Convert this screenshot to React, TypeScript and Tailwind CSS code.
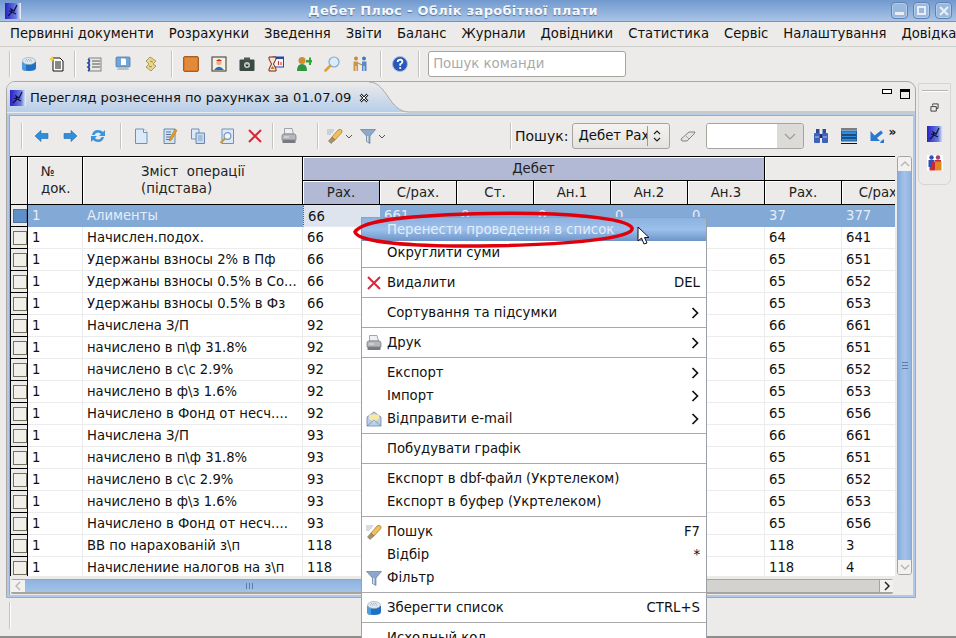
import React from "react";

const FONT = "font-['DejaVu_Sans',sans-serif]";

type IconProps = { className?: string };

function Svg({ children, className = "" }: { children: React.ReactNode; className?: string }) {
  return (
    <svg viewBox="0 0 16 16" className={`w-4 h-4 shrink-0 ${className}`}>
      {children}
    </svg>
  );
}

function AppIcon({ className }: IconProps) {
  return (
    <Svg className={className}>
      <defs>
        <linearGradient id="app" x1="0" x2="1" y1="0" y2="0">
          <stop offset="0" stopColor="#2a20c8" />
          <stop offset="0.7" stopColor="#6a80dc" />
          <stop offset="1" stopColor="#f0f4fa" />
        </linearGradient>
      </defs>
      <rect width="16" height="16" fill="url(#app)" />
      <path d="M3 13 L7 9 L6 6 L9 8 L12 2 M7 9 L11 11 M4 8 L7 9" stroke="#101040" strokeWidth="1.2" fill="none" />
    </Svg>
  );
}

function DbIcon({ className }: IconProps) {
  return (
    <Svg className={className}>
      <path d="M1 6 V12 Q1 15 8 15 Q15 15 15 12 V6 Z" fill="#1f6fc4" />
      <path d="M1 6 V12 Q1 15 5 15 V6 Z" fill="#4f9be0" />
      <ellipse cx="8" cy="5" rx="6.5" ry="3.5" fill="#dfe6ee" stroke="#8aa" strokeWidth="0.6" />
      <path d="M4 5 H12 M5 3.6 H11" stroke="#8a9aa8" strokeWidth="0.7" strokeDasharray="1 1" />
    </Svg>
  );
}

function NoteStarIcon() {
  return (
    <Svg>
      <path d="M4 2 H11 L14 5 V15 H4 Z" fill="#fff" stroke="#111" strokeWidth="1" />
      <path d="M6 6 H12 M6 8 H12 M6 10 H12 M6 12 H12" stroke="#111" strokeWidth="1" />
      <path d="M3 0 L4 2 L6 3 L4 4 L3 6 L2 4 L0 3 L2 2 Z" fill="#f5d020" />
    </Svg>
  );
}

function ListLinkIcon() {
  return (
    <Svg>
      <rect x="3" y="2" width="12" height="13" fill="#e8e8e4" stroke="#666" strokeWidth="0.8" />
      <path d="M6 5 H14 M6 8 H14 M6 11 H14" stroke="#555" strokeWidth="1" />
      <path d="M2 3 Q5 5 2 7 Q5 9 2 11 Q5 13 2 15" stroke="#2448a8" strokeWidth="1.6" fill="none" />
    </Svg>
  );
}

function MonitorIcon() {
  return (
    <Svg>
      <rect x="1" y="1" width="14" height="10" rx="1" fill="#6ea6dc" stroke="#5a7a9c" strokeWidth="0.8" />
      <path d="M6 2.5 H10 L11 3.5 V9 H6 Z" fill="#fff" />
      <path d="M3 12 H13 L14 14 H2 Z" fill="#b8c0c8" />
    </Svg>
  );
}

function ScrollIcon() {
  return (
    <Svg>
      <path d="M7 1 L13 5 L10 8 L13 10 L8 15 L3 11 L6 8 L3 5 Z" fill="#e6d690" stroke="#9a8a40" strokeWidth="0.8" />
      <path d="M7 5 L10 6 M6 10 L9 11" stroke="#8a7a30" strokeWidth="0.8" />
    </Svg>
  );
}

function OrangeSquare() {
  return (
    <Svg>
      <rect x="0.5" y="0.5" width="15" height="15" rx="1.5" fill="#d9772a" stroke="#a85c20" />
      <rect x="2" y="2" width="12" height="12" fill="#e08a3c" />
    </Svg>
  );
}

function PortraitIcon() {
  return (
    <Svg>
      <rect x="1" y="1" width="14" height="14" fill="#f4f0e0" stroke="#333" />
      <circle cx="8" cy="6.5" r="2.6" fill="#e8b090" />
      <path d="M5 5 Q8 1.5 11 5 Z" fill="#c82818" />
      <path d="M3 14 Q8 7.5 13 14 Z" fill="#2a6cb8" />
    </Svg>
  );
}

function CameraIcon() {
  return (
    <Svg>
      <rect x="0.5" y="3.5" width="15" height="11.5" rx="1" fill="#3a4a44" />
      <rect x="5" y="1.5" width="6" height="3" fill="#4a5a54" />
      <circle cx="8" cy="9" r="3" fill="#c8d0c8" />
      <circle cx="8" cy="9" r="1.4" fill="#202824" />
      <path d="M7 8 H9 M8 7 V9" stroke="#e0e0e0" strokeWidth="0.6" />
    </Svg>
  );
}

function HourglassIcon() {
  return (
    <Svg>
      <rect x="5" y="1" width="10.5" height="10" fill="#f4f4f8" stroke="#2848a8" />
      <rect x="5" y="1" width="10.5" height="2" fill="#2848a8" />
      <path d="M10 5 H11 V9 H10 Z M12.5 6 H13.5 V9 H12.5 Z" fill="#d03020" />
      <path d="M1 1 H8 V3 L5.5 8 L8 13 V15 H1 V13 L3.5 8 L1 3 Z" fill="#f2e8d0" stroke="#801c10" strokeWidth="1" />
      <path d="M2.5 13 L4.5 10 L6.5 13 Z" fill="#b08030" />
    </Svg>
  );
}

function UserAddIcon() {
  return (
    <Svg>
      <circle cx="6" cy="4.5" r="3.5" fill="#d48a30" />
      <path d="M1 15 Q1 8 6 8 Q11 8 11 15 Z" fill="#2f9440" />
      <path d="M10 4 H13 V1.5 H15 V4 H16 V6.5 H15 V9 H13 V6.5 H10 Z" fill="#2ca838" />
    </Svg>
  );
}

function MagnifierIcon() {
  return (
    <Svg>
      <circle cx="10" cy="6" r="5" fill="#d8ecfa" stroke="#88a8c8" strokeWidth="1.2" />
      <path d="M6 10 L1.5 14.5" stroke="#dba040" strokeWidth="2.6" strokeLinecap="round" />
    </Svg>
  );
}

function MeetingIcon() {
  return (
    <Svg>
      <circle cx="4" cy="2.5" r="2" fill="#c88a40" />
      <path d="M1.5 5.5 H6 V15 H4.5 V10 H3.5 V15 H1.5 Z" fill="#c89848" />
      <circle cx="12" cy="2.5" r="2" fill="#4878b8" />
      <path d="M10 5.5 H14.5 V15 H12.5 V10 H11.5 V15 H10 Z" fill="#5888c8" />
      <path d="M6 7 L10 9" stroke="#b89040" strokeWidth="1.2" />
    </Svg>
  );
}

function HelpIcon() {
  return (
    <Svg>
      <circle cx="8" cy="8" r="7.5" fill="#2858b8" stroke="#a8bcdc" />
      <path d="M5.6 6 Q5.8 3.6 8.2 3.6 Q10.6 3.8 10.4 6 Q10 7.4 8.2 8.2 V9.8" fill="none" stroke="#fff" strokeWidth="1.8" />
      <circle cx="8.2" cy="12" r="1.1" fill="#fff" />
    </Svg>
  );
}

function ArrowLeftIcon() {
  return (
    <Svg>
      <path d="M1 8 L7 2.5 V5.5 H14 V10.5 H7 V13.5 Z" fill="#2f8fdc" stroke="#2068b0" strokeWidth="0.6" />
    </Svg>
  );
}

function ArrowRightIcon() {
  return (
    <Svg>
      <path d="M15 8 L9 2.5 V5.5 H2 V10.5 H9 V13.5 Z" fill="#2f8fdc" stroke="#2068b0" strokeWidth="0.6" />
    </Svg>
  );
}

function RefreshIcon() {
  return (
    <Svg>
      <path d="M2 7 Q3 2 8 2 Q11 2 13 4 L15 2 V8 H9 L11 6 Q9.5 4.5 8 4.5 Q5.5 4.5 4.5 7 Z" fill="#3c94dc" />
      <path d="M14 9 Q13 14 8 14 Q5 14 3 12 L1 14 V8 H7 L5 10 Q6.5 11.5 8 11.5 Q10.5 11.5 11.5 9 Z" fill="#3c94dc" />
    </Svg>
  );
}

function PageIcon() {
  return (
    <Svg>
      <path d="M2.5 1 H10.5 L14 4.5 V15.5 H2.5 Z" fill="#dce9f8" stroke="#7090b8" />
      <path d="M10.5 1 V4.5 H14" fill="#fff" stroke="#7090b8" />
    </Svg>
  );
}

function EditPageIcon() {
  return (
    <Svg>
      <path d="M2 1 H13 V15.5 H2 Z" fill="#cfe2f6" stroke="#6888b0" />
      <path d="M4 4 H9 M4 6.5 H9 M4 9 H9 M4 11.5 H9" stroke="#506888" strokeWidth="0.9" />
      <path d="M13 1 L15 2.5 L9.5 12 L7.5 13 L7.8 10.5 Z" fill="#e8a020" stroke="#a86810" strokeWidth="0.5" />
    </Svg>
  );
}

function CopyIcon() {
  return (
    <Svg>
      <path d="M1.5 1 H9 V11 H1.5 Z" fill="#dce9f8" stroke="#7090b8" />
      <path d="M6 5 H14.5 V15.5 H6 Z" fill="#c8ddf4" stroke="#6888b0" />
      <path d="M8 8 H12.5 M8 10 H12.5 M8 12 H12.5" stroke="#7090b8" strokeWidth="0.8" />
    </Svg>
  );
}

function FindPageIcon() {
  return (
    <Svg>
      <path d="M3 1 H14.5 V15.5 H3 Z" fill="#dce9f8" stroke="#7090b8" />
      <circle cx="8.5" cy="8" r="3.4" fill="#f0f6fc" stroke="#7898c0" strokeWidth="1.2" />
      <path d="M6 10.5 L1.5 15" stroke="#c8983c" strokeWidth="2.2" />
    </Svg>
  );
}

function DeleteIcon({ className }: IconProps) {
  return (
    <Svg className={className}>
      <path d="M2 2 L14 14 M14 2 L2 14" stroke="#d8283c" strokeWidth="2" />
    </Svg>
  );
}

function PrinterIcon({ className }: IconProps) {
  return (
    <Svg className={className}>
      <path d="M3.5 0.5 H11 L12.5 6 H3.5 Z" fill="#eef0f2" stroke="#8a9096" strokeWidth="0.8" />
      <path d="M1 8 Q1 6 3 6 H13 Q15 6 15 8 V12 H1 Z" fill="#b4b8bc" stroke="#777" strokeWidth="0.7" />
      <path d="M1.5 12 H14.5 V15 H1.5 Z" fill="#777b80" />
      <path d="M3 9 H8" stroke="#e8eaec" strokeWidth="1" />
    </Svg>
  );
}

function SearchPenIcon({ className }: IconProps) {
  return (
    <Svg className={className}>
      <path d="M5 9 L11 2 Q13 0.5 15 2.5 Q15.5 4 14 5.5 L8 12 Z" fill="#f0c060" stroke="#a07820" strokeWidth="0.7" />
      <path d="M5 9 L8 12 L4 15.5 L1.5 13 Z" fill="#a89070" stroke="#706040" strokeWidth="0.5" />
      <path d="M0 2 H7 M0 4 H6 M0 6 H4" stroke="#9aa8c0" strokeWidth="0.8" />
    </Svg>
  );
}

function FilterIcon({ className }: IconProps) {
  return (
    <Svg className={className}>
      <path d="M0.5 1.5 H15.5 L10 8 V15.5 L6.5 13.5 V8 Z" fill="#8ca8cc" stroke="#5a6e8c" strokeWidth="0.6" />
      <path d="M7 8 H8.4 V14 L7 13.4 Z" fill="#d4e0ee" />
    </Svg>
  );
}

function MailIcon({ className }: IconProps) {
  return (
    <Svg className={className}>
      <path d="M1 6 L8 1 L15 6 V15 H1 Z" fill="#b8d0ec" stroke="#7088a8" strokeWidth="0.8" />
      <path d="M3 3.5 H13 V8 L8 11 L3 8 Z" fill="#f8e8a8" />
      <path d="M1 15 L8 9 L15 15" fill="none" stroke="#7088a8" strokeWidth="0.7" />
    </Svg>
  );
}

function Caret() {
  return (
    <svg viewBox="0 0 8 5" className="w-2 h-[5px] shrink-0 ml-[2px]">
      <path d="M1 1 L4 4 L7 1" fill="none" stroke="#555" strokeWidth="1" />
    </svg>
  );
}

function EraserIcon() {
  return (
    <Svg>
      <path d="M1 11 L9 4 H15 L14 6 L7 13 H2 Z" fill="#e4e4e0" stroke="#777" strokeWidth="0.9" />
      <path d="M6 8 L9 11" stroke="#888" strokeWidth="0.7" />
    </Svg>
  );
}

function BinocularsIcon() {
  return (
    <Svg>
      <rect x="3" y="1" width="3.5" height="4" fill="#2d4c98" />
      <rect x="9.5" y="1" width="3.5" height="4" fill="#2d4c98" />
      <rect x="1" y="5" width="6" height="10" rx="1" fill="#3e62b8" />
      <rect x="9" y="5" width="6" height="10" rx="1" fill="#3e62b8" />
      <rect x="7" y="6" width="2" height="4" fill="#1d2d70" />
      <path d="M2 9 H6 M10 9 H14" stroke="#b0c4ec" strokeWidth="1" />
    </Svg>
  );
}

function RowsIcon() {
  return (
    <Svg>
      <path d="M0 1 H16 M0 15.5 H16" stroke="#111" strokeWidth="1" />
      <rect x="0.5" y="3" width="15" height="10" fill="#2f8ce0" stroke="#1c5ea8" />
      <path d="M1 7 H15 M1 10 H15" stroke="#111" strokeWidth="1" />
    </Svg>
  );
}

function UndoIcon() {
  return (
    <Svg>
      <path d="M1.5 3 V13 H11 L8 10 L14 5 L12 2.5 L5.5 7.5 Z" fill="#2a78d0" />
      <path d="M12 13 L15 11 V15 H11 Z" fill="#2a78d0" />
    </Svg>
  );
}

function PeopleIcon() {
  return (
    <Svg>
      <rect width="16" height="16" fill="#fff" />
      <circle cx="4.5" cy="2.5" r="2.2" fill="#3050b8" />
      <path d="M1.5 5 H7.5 V12 H1.5 Z" fill="#3050b8" />
      <circle cx="11" cy="2.5" r="2.2" fill="#a04070" />
      <path d="M8 5 H14 V9 H8 Z" fill="#c82838" />
      <path d="M5 7 H8 V15.5 H5 Z" fill="#c82838" />
      <path d="M8 6.5 H14.5 V15.5 H8 Z" fill="#dc8a20" />
      <path d="M2.5 12 H5 V15.5 H2.5 Z" fill="#c03040" />
    </Svg>
  );
}

function Handle({ className = "" }: IconProps) {
  return <div className={`w-[2px] border-l border-[#c4c3bf] bg-white ${className}`} />;
}

const MENUS = ["Первинні документи", "Розрахунки", "Зведення", "Звіти", "Баланс", "Журнали", "Довідники", "Статистика", "Сервіс", "Налаштування", "Довідка"];

const ROWS: [string, string, string, string][] = [
  ["1", "Начислен.подох.", "66", "641"],
  ["1", "Удержаны взносы 2% в Пф", "66", "651"],
  ["1", "Удержаны взносы 0.5% в Со...", "66", "652"],
  ["1", "Удержаны взносы 0.5% в Фз", "66", "653"],
  ["1", "Начислена З/П", "92", "661"],
  ["1", "начислено в п\\ф 31.8%", "92", "651"],
  ["1", "начислено в с\\с 2.9%", "92", "652"],
  ["1", "начислено в ф\\з 1.6%", "92", "653"],
  ["1", "Начислено в Фонд от несч....", "92", "656"],
  ["1", "Начислена З/П", "93", "661"],
  ["1", "начислено в п\\ф 31.8%", "93", "651"],
  ["1", "начислено в с\\с 2.9%", "93", "652"],
  ["1", "начислено в ф\\з 1.6%", "93", "653"],
  ["1", "Начислено в Фонд от несч....", "93", "656"],
  ["1", "ВВ по нарахованій з\\п", "118", "3"],
  ["1", "Начислениие налогов на з\\п", "118", "4"],
];
const RIGHT_RAX = ["64", "65", "65", "65", "66", "65", "65", "65", "65", "66", "65", "65", "65", "65", "118", "118"];

const GRID = "grid grid-cols-[18px_55px_220px_77px_77px_77px_77px_77px_77px_77px_77px]";
const HEAD = "flex items-center justify-center border-r border-b border-black bg-[#ecebe9] shadow-[inset_1px_1px_0_#ffffff] text-[#222] text-[13.3px]";

function Selector({ active = false }: { active?: boolean }) {
  return (
    <div className="h-full border-l border-r border-b border-black flex items-center justify-center bg-[#ecebe9] pl-px">
      <div className={`w-[14px] h-[14px] border ${active ? "bg-[#5f8fc8] border-[#54719a]" : "bg-[#f1efe9] border-[#756f5d]"}`} />
    </div>
  );
}

function Cell({ children, className = "" }: { children?: React.ReactNode; className?: string }) {
  return <div className={`h-full border-r border-b border-[#ececec] pl-[4px] text-[13.2px] leading-[21px] overflow-hidden whitespace-nowrap ${className}`}>{children}</div>;
}

function MenuItem({ icon, label, shortcut, arrow, selected }: { icon?: React.ReactNode; label: string; shortcut?: string; arrow?: boolean; selected?: boolean }) {
  return (
    <div className={`h-[23px] flex items-center pl-[4px] pr-[6px] shrink-0 text-[13.25px] ${selected ? "bg-gradient-to-b from-[#8eb2df] via-[#9cc0ec] to-[#6e95c8] text-[#e4edf8]" : "text-[#111]"}`}>
      <div className="w-4 h-4 shrink-0 mr-[5px]">{icon}</div>
      <span className="flex-1 whitespace-nowrap">{label}</span>
      {shortcut && <span>{shortcut}</span>}
      {arrow && (
        <svg viewBox="0 0 8 12" className="w-2 h-3 mr-[1px]">
          <path d="M1.5 1 L6.5 6 L1.5 11" fill="none" stroke="#111" strokeWidth="1.7" />
        </svg>
      )}
    </div>
  );
}

function MenuSep() {
  return (
    <div className="h-[7px] shrink-0 flex items-center">
      <div className="h-px w-full bg-[#aaaaaa]" />
    </div>
  );
}

export default function App() {
  return (
    <div className={`relative w-[956px] h-[638px] overflow-hidden bg-[#ecebe9] text-[13px] text-[#111] ${FONT}`}>
      {/* Title bar */}
      <div className="relative h-[22px] flex items-center bg-gradient-to-b from-[#7199cf] to-[#a9c4e6] border-b border-[#6f93c2]">
        <AppIcon className="ml-[5px]" />
        <div className="absolute inset-x-0 text-center font-bold text-[#f4f7fb] pr-[50px] tracking-[0.3px] [text-shadow:0_1px_1px_#50709c]">Дебет Плюс - Облік заробітної плати</div>
        <div className="ml-auto mr-[4px] flex gap-[5px]">
          {["min", "max", "close"].map((b) => (
            <div key={b} className="w-[17px] h-[17px] rounded-[4px] border border-[#5f82b0] bg-[#9ab8de] shadow-[inset_0_0_0_1px_#b4cce8] flex items-center justify-center">
              {b === "min" && <div className="w-[9px] h-[3px] bg-[#e8eef6] mt-[6px]" />}
              {b === "max" && <div className="w-[9px] h-[9px] border-2 border-[#e8eef6]" />}
              {b === "close" && (
                <svg viewBox="0 0 10 10" className="w-[10px] h-[10px]">
                  <path d="M1 1 L9 9 M9 1 L1 9" stroke="#e8eef6" strokeWidth="2.2" />
                </svg>
              )}
            </div>
          ))}
        </div>
      </div>

      {/* Menu bar */}
      <div className="h-[25px] flex items-center pl-[2.5px] border-b border-[#cfcec9] whitespace-nowrap text-[13.2px]">
        {MENUS.map((m) => (
          <div key={m} className="px-[7.5px] shrink-0">{m}</div>
        ))}
      </div>

      {/* Main toolbar */}
      <div className="h-[34px] flex items-center text-[#aaa]">
        <Handle className="h-[26px] ml-[9px]" />
        <DbIcon className="ml-[10px]" />
        <div className="ml-[12px]"><NoteStarIcon /></div>
        <Handle className="h-[26px] ml-[9px]" />
        <div className="ml-[10px] flex gap-[12.5px]">
          <ListLinkIcon />
          <MonitorIcon />
          <ScrollIcon />
        </div>
        <Handle className="h-[26px] ml-[12px]" />
        <div className="ml-[10px] flex gap-[12.2px]">
          <OrangeSquare />
          <PortraitIcon />
          <CameraIcon />
          <HourglassIcon />
          <UserAddIcon />
          <MagnifierIcon />
          <MeetingIcon />
        </div>
        <Handle className="h-[26px] ml-[12px]" />
        <div className="ml-[10px]"><HelpIcon /></div>
        <Handle className="h-[26px] ml-[10px]" />
        <div className="ml-[8px] w-[198px] h-[26px] rounded-[3px] border border-[#a5a49f] bg-white flex items-center pl-[4px] text-[13.3px] text-[#aaaaaa]">Пошук команди</div>
      </div>

      {/* Work area */}
      <div className="flex h-[517px]">
        <div className="ml-[6px] w-[910px] h-[517px] border border-[#a9a8a4] rounded-t-[9px] overflow-hidden flex flex-col shrink-0">
          {/* Tab strip */}
          <div className="relative h-[31px] shrink-0 flex items-center">
            <svg viewBox="0 0 908 31" className="absolute inset-0 w-[908px] h-[31px]">
              <defs>
                <linearGradient id="tab" x1="0" x2="0" y1="0" y2="1">
                  <stop offset="0" stopColor="#ecebe9" />
                  <stop offset="1" stopColor="#b6cdea" />
                </linearGradient>
              </defs>
              <path d="M0 31 V0 H362 C380 0 382 30 402 30 H0 Z" fill="url(#tab)" />
              <path d="M362 0 C380 0 382 30 402 30 H908" fill="none" stroke="#a9a8a4" />
            </svg>
            <AppIcon className="relative ml-[3px]" />
            <span className="relative ml-[4px] text-[13.1px] whitespace-nowrap">Перегляд рознесення по рахунках за 01.07.09</span>
            <svg viewBox="0 0 10 10" className="relative ml-[8px] w-[10px] h-[10px]">
              <path d="M1.5 1.5 L8.5 8.5 M8.5 1.5 L1.5 8.5" stroke="#222" strokeWidth="2.6" />
              <path d="M1.5 1.5 L8.5 8.5 M8.5 1.5 L1.5 8.5" stroke="#fff" strokeWidth="1" />
            </svg>
            <div className="absolute right-[5px] top-[7px] flex gap-[8px]">
              <div className="w-[10px] h-[5px] border border-black bg-white" />
              <div className="w-[10px] h-[10px] border border-black border-t-[3px]" />
            </div>
          </div>
          <div className="h-[2px] shrink-0 bg-[#b6cdea]" />

          {/* Inner frame */}
          <div className="flex-1 min-h-0 flex flex-col border-l-2 border-r-2 border-b-2 border-[#b0c9ea]">
            <div className="flex-1 min-h-0 border-l border-t border-[#a9a8a4] flex flex-col">
              {/* Inner toolbar */}
              <div className="h-[40px] shrink-0 flex items-center">
                <Handle className="h-[26px] ml-[11px]" />
                <div className="ml-[11px] flex gap-[12px]">
                  <ArrowLeftIcon />
                  <ArrowRightIcon />
                  <RefreshIcon />
                </div>
                <Handle className="h-[26px] ml-[14px]" />
                <div className="ml-[11px] flex gap-[12.5px]">
                  <PageIcon />
                  <EditPageIcon />
                  <CopyIcon />
                  <FindPageIcon />
                  <DeleteIcon />
                </div>
                <Handle className="h-[26px] ml-[9px]" />
                <PrinterIcon className="ml-[7px]" />
                <Handle className="h-[26px] ml-[20px]" />
                <SearchPenIcon className="ml-[8px]" />
                <Caret />
                <FilterIcon className="ml-[7px]" />
                <Caret />
                <Handle className="h-[26px] ml-[124px]" />
                <span className="ml-[3px] text-[14px]">Пошук:</span>
                <div className="ml-[4px] w-[98px] h-[26px] rounded-[3px] border border-[#a5a49f] bg-gradient-to-b from-[#f4f3f1] to-[#e4e3e0] flex items-center pl-[5px]">
                  <span className="text-[13.3px] w-[70px] overflow-hidden whitespace-nowrap border-r border-[#999]">Дебет Рах</span>
                  <svg viewBox="0 0 8 14" className="ml-[5px] w-2 h-[14px]">
                    <path d="M1 5 L4 2 L7 5 M1 9 L4 12 L7 9" fill="none" stroke="#222" strokeWidth="1.2" />
                  </svg>
                </div>
                <div className="ml-[10px]"><EraserIcon /></div>
                <div className="ml-[10px] w-[98px] h-[26px] rounded-[3px] border border-[#a5a49f] flex overflow-hidden">
                  <div className="w-[70px] bg-white" />
                  <div className="flex-1 bg-[#dcdbd8] flex items-center justify-center">
                    <svg viewBox="0 0 12 7" className="w-3 h-[7px]">
                      <path d="M1 1 L6 6 L11 1" fill="none" stroke="#9a9a98" strokeWidth="1.2" />
                    </svg>
                  </div>
                </div>
                <div className="ml-[9px]"><BinocularsIcon /></div>
                <div className="ml-[12px]"><RowsIcon /></div>
                <div className="ml-[12px]"><UndoIcon /></div>
                <span className="ml-[3px] -mt-[9px] text-[12px] font-bold leading-none">»</span>
              </div>

              {/* Table + scrollbars */}
              <div className="flex-1 min-h-0 flex">
                <div className="w-[885px] shrink-0 flex flex-col">
                  <div className="h-[420px] overflow-hidden">
                    <div className={`${GRID} grid-rows-[24px_24px] border-t border-black`}>
                      <div className={`${HEAD} row-span-2 border-l`} />
                      <div className={`${HEAD} row-span-2 !justify-start pl-[13px] leading-[17px]`}>
                        <div className="-mt-[2px]">№<br />док.</div>
                      </div>
                      <div className={`${HEAD} row-span-2 !justify-start pl-[58px] leading-[17px]`}>
                        <div className="-mt-[2px] whitespace-pre">{"Зміст  операції\n(підстава)"}</div>
                      </div>
                      <div className={`${HEAD} col-span-6 !bg-[#b1b9d4] shadow-[inset_0_0_0_1px_#dfe1ea]`}>Дебет</div>
                      <div className={`${HEAD} col-span-2 border-r-0`} />
                      <div className={`${HEAD} !bg-[#b1b9d4] shadow-[inset_0_0_0_1px_#ecebe9]`}>Рах.</div>
                      {["С/рах.", "Ст.", "Ан.1", "Ан.2", "Ан.3", "Рах.", "С/рах."].map((h, i) => (
                        <div key={i} className={HEAD}>{h}</div>
                      ))}
                    </div>

                    {/* Selected row */}
                    <div className={`${GRID} h-[22px] bg-[#83a9d7] text-[#e6edf6]`}>
                      <Selector active />
                      <Cell className="border-transparent">1</Cell>
                      <Cell className="border-transparent">Алименты</Cell>
                      <Cell className="bg-[#dde4ee] border border-dotted border-[#555] !border-l-[#555] text-[#111] pl-[3px]">66</Cell>
                      {["661", "0", "0", "0", "0", "37", "377"].map((v, i) => (
                        <Cell key={i} className="border-transparent">{v}</Cell>
                      ))}
                    </div>

                    {ROWS.map((r, i) => (
                      <div key={i} className={`${GRID} h-[22px] bg-white`}>
                        <Selector />
                        <Cell>{r[0]}</Cell>
                        <Cell>{r[1]}</Cell>
                        <Cell>{r[2]}</Cell>
                        <Cell />
                        <Cell />
                        <Cell />
                        <Cell />
                        <Cell />
                        <Cell>{RIGHT_RAX[i]}</Cell>
                        <Cell>{r[3]}</Cell>
                      </div>
                    ))}
                  </div>

                  {/* Horizontal scrollbar */}
                  <div className="mt-[3px] ml-px w-[882px] h-[15px] flex bg-[#d3d2ce] border-t border-b-2 border-[#a5a49f] rounded-[2px]">
                    <div className="w-[14px] bg-[#f2f1ef] flex items-center justify-center">
                      <svg viewBox="0 0 6 10" className="w-[6px] h-[10px]">
                        <path d="M5 1 L1 5 L5 9" fill="none" stroke="#b5b4b0" strokeWidth="1.3" />
                      </svg>
                    </div>
                    <div className="w-[448px] bg-gradient-to-b from-[#8fb3df] to-[#a4c2e8] flex items-center justify-center gap-px">
                      <div className="w-px h-[6px] bg-[#5a7ca8]" />
                      <div className="w-px h-[6px] ml-px bg-[#5a7ca8]" />
                      <div className="w-px h-[6px] ml-px bg-[#5a7ca8]" />
                    </div>
                    <div className="flex-1" />
                    <div className="w-[14px] bg-[#f2f1ef] border-l border-[#a5a49f] flex items-center justify-center">
                      <svg viewBox="0 0 6 10" className="w-[6px] h-[10px]">
                        <path d="M1 1 L5 5 L1 9" fill="none" stroke="#222" strokeWidth="1.5" />
                      </svg>
                    </div>
                  </div>
                </div>

                {/* Vertical scrollbar */}
                <div className="ml-[2px] w-[15px] h-[419px] flex flex-col border border-[#a5a49f] rounded-[3px] overflow-hidden">
                  <div className="h-[14px] bg-[#f2f1ef] flex items-center justify-center">
                    <svg viewBox="0 0 10 6" className="w-[10px] h-[6px]">
                      <path d="M1 5 L5 1 L9 5" fill="none" stroke="#b5b4b0" strokeWidth="1.3" />
                    </svg>
                  </div>
                  <div className="flex-1 bg-gradient-to-r from-[#85acdc] via-[#a4c2e8] to-[#8fb3df] flex flex-col items-center justify-center gap-px">
                    <div className="w-[6px] h-px bg-[#5a7ca8]" />
                    <div className="w-[6px] h-px mt-px bg-[#5a7ca8]" />
                    <div className="w-[6px] h-px mt-px bg-[#5a7ca8]" />
                  </div>
                  <div className="h-[14px] bg-[#f2f1ef] flex items-center justify-center">
                    <svg viewBox="0 0 10 6" className="w-[10px] h-[6px]">
                      <path d="M1 1 L5 5 L9 1" fill="none" stroke="#b5b4b0" strokeWidth="1.3" />
                    </svg>
                  </div>
                </div>
              </div>
            </div>
          </div>
        </div>

        {/* Side dock */}
        <div className="ml-[2px] mt-[2px] w-[33px] h-[102px] border border-[#d6d5d1] rounded-b-[6px] flex flex-col items-center">
          <div className="mt-[6px] w-[26px] h-[2px] border-t border-[#b5b4b0] bg-white" />
          <svg viewBox="0 0 10 10" className="mt-[11px] w-[9px] h-[9px]">
            <path d="M3 3 V1 H9 V6 H7 M1 4 H7 V9 H1 Z" fill="none" stroke="#333" strokeWidth="1" />
          </svg>
          <AppIcon className="mt-[14px]" />
          <div className="mt-[13px]"><PeopleIcon /></div>
        </div>
      </div>

      {/* Status bar */}
      <div className="absolute left-0 right-0 top-[598px] h-[40px] border-b-2 border-[#8e8d89]">
        <Handle className="h-[27px] mt-[4px] ml-[9px]" />
      </div>

      {/* Context menu */}
      <div className="absolute left-[361px] top-[217px] w-[346px] h-[430px] bg-white border border-[#9a9fa8] flex flex-col overflow-hidden">
        <MenuItem label="Перенести проведення в список" selected />
        <MenuItem label="Округлити суми" />
        <MenuSep />
        <MenuItem icon={<DeleteIcon />} label="Видалити" shortcut="DEL" />
        <MenuSep />
        <MenuItem label="Сортування та підсумки" arrow />
        <MenuSep />
        <MenuItem icon={<PrinterIcon />} label="Друк" arrow />
        <MenuSep />
        <MenuItem label="Експорт" arrow />
        <MenuItem label="Імпорт" arrow />
        <MenuItem icon={<MailIcon />} label="Відправити e-mail" arrow />
        <MenuSep />
        <MenuItem label="Побудувати графік" />
        <MenuSep />
        <MenuItem label="Експорт в dbf-файл (Укртелеком)" />
        <MenuItem label="Експорт в буфер (Укртелеком)" />
        <MenuSep />
        <MenuItem icon={<SearchPenIcon />} label="Пошук" shortcut="F7" />
        <MenuItem label="Відбір" shortcut="*" />
        <MenuItem icon={<FilterIcon />} label="Фільтр" />
        <MenuSep />
        <MenuItem icon={<DbIcon />} label="Зберегти список" shortcut="CTRL+S" />
        <MenuSep />
        <MenuItem label="Исходный код" />
      </div>

      {/* Red hand-drawn ellipse */}
      <svg viewBox="0 0 290 44" className="absolute left-[350px] top-[208px] w-[290px] h-[44px] pointer-events-none">
        <path d="M5 24 C12 12 60 7 140 5.5 C215 4 278 10 282 20 C285 30 220 37 130 38 C60 38.5 8 34 5 24 Z" fill="none" stroke="#e0000c" strokeWidth="3.5" />
      </svg>

      {/* Mouse cursor */}
      <svg viewBox="0 0 14 20" className="absolute left-[637px] top-[226px] w-[14px] h-5 pointer-events-none">
        <path d="M1 1 V15 L4.5 12 L7 18 L10 17 L7.5 11.5 H12 Z" fill="#fff" stroke="#111" strokeWidth="1" strokeLinejoin="round" />
      </svg>
    </div>
  );
}
